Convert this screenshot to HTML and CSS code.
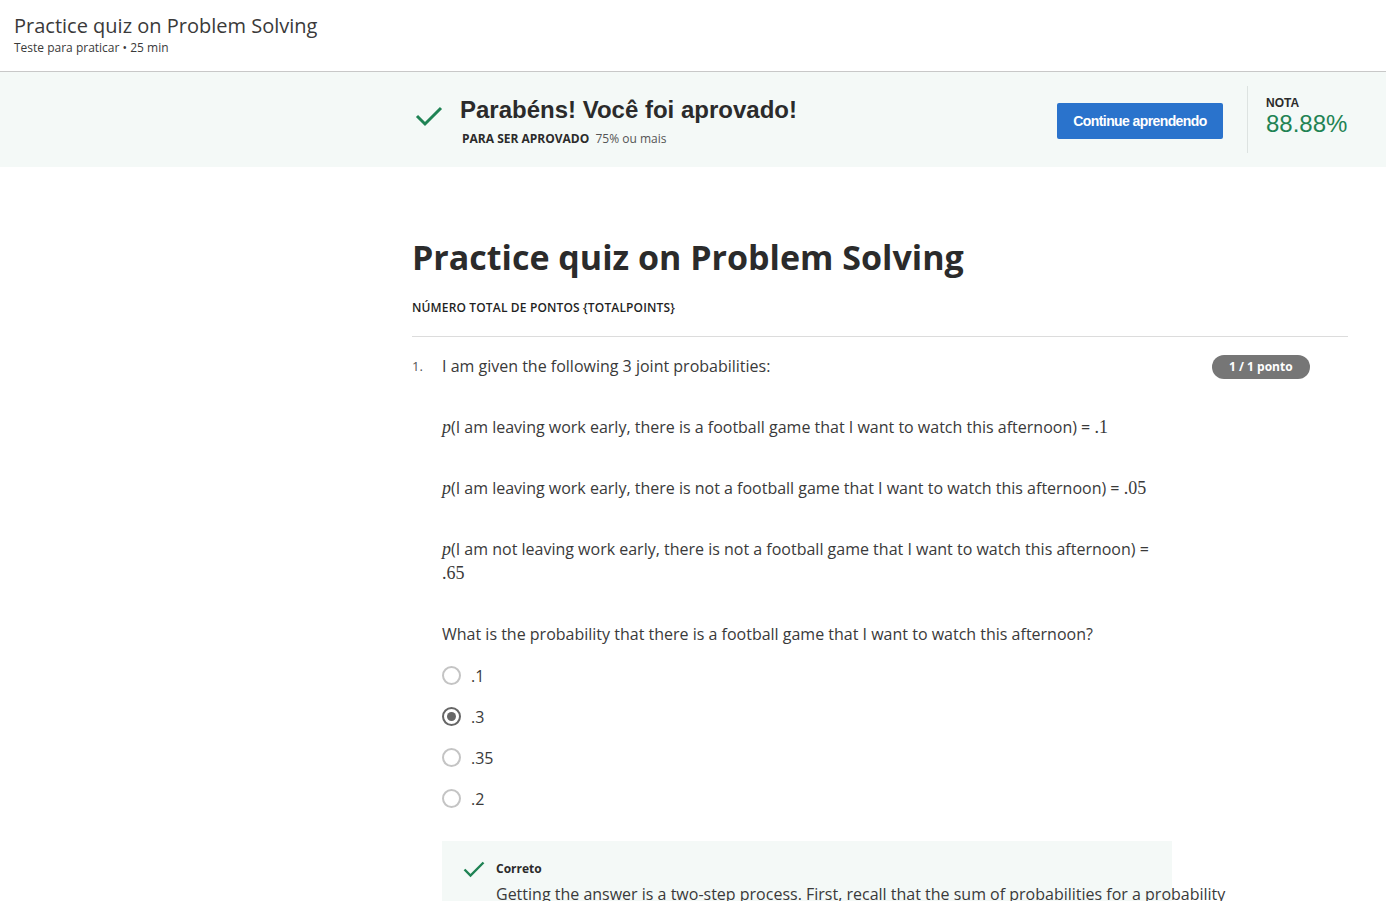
FILE: index.html
```html
<!DOCTYPE html>
<html lang="pt">
<head>
<meta charset="utf-8">
<title>Practice quiz on Problem Solving</title>
<link rel="stylesheet" href="styles.css">
</head>
<body>
<header class="top">
  <div class="top-title">Practice quiz on Problem Solving</div>
  <div class="top-sub">Teste para praticar • 25 min</div>
</header>
<section class="banner">
  <div class="banner-inner">
    <svg class="banner-check" width="28" height="22" viewBox="0 0 28 22"><path d="M2 11 L10 19 L26 3" fill="none" stroke="#1f8354" stroke-width="3"/></svg>
    <div class="banner-text">
      <div class="banner-title">Parabéns! Você foi aprovado!</div>
      <div class="banner-sub"><b>PARA SER APROVADO</b> <span>75% ou mais</span></div>
    </div>
    <button class="btn">Continue aprendendo</button>
    <div class="divider"></div>
    <div class="grade">
      <div class="grade-label">NOTA</div>
      <div class="grade-value">88.88%</div>
    </div>
  </div>
</section>
<main class="main">
  <h1 class="quiz-title">Practice quiz on Problem Solving</h1>
  <div class="points">NÚMERO TOTAL DE PONTOS {TOTALPOINTS}</div>
  <div class="question">
    <div class="qnum">1.</div>
    <div class="qbody">
      <p class="qp">I am given the following 3 joint probabilities:</p>
      <p class="qp"><span class="m">p</span>(I am leaving work early, there is a football game that I want to watch this afternoon) = <span class="n">.1</span></p>
      <p class="qp"><span class="m">p</span>(I am leaving work early, there is not a football game that I want to watch this afternoon) = <span class="n">.05</span></p>
      <p class="qp narrow"><span class="m">p</span>(I am not leaving work early, there is not a football game that I want to watch this afternoon) = <span class="n">.65</span></p>
      <p class="qp last">What is the probability that there is a football game that I want to watch this afternoon?</p>
      <div class="options">
        <label class="opt"><span class="radio"></span>.1</label>
        <label class="opt"><span class="radio checked"></span>.3</label>
        <label class="opt"><span class="radio"></span>.35</label>
        <label class="opt"><span class="radio"></span>.2</label>
      </div>
      <div class="feedback">
        <svg class="fb-check" width="22" height="17" viewBox="0 0 22 17"><path d="M1.5 8.5 L7.5 14.5 L20.5 1.5" fill="none" stroke="#1f8354" stroke-width="2.4"/></svg>
        <div class="fb-text">
          <div class="fb-title">Correto</div>
          <div class="fb-body">Getting the answer is a two-step process. First, recall that the sum of probabilities for a probability</div>
        </div>
      </div>
    </div>
    <div class="badge">1 / 1 ponto</div>
  </div>
</main>
</body>
</html>
```
FILE: styles.css
```css
* { box-sizing: border-box; }
html, body { margin: 0; padding: 0; }
body {
  font-family: "Open Sans", "DejaVu Sans", sans-serif;
  color: #1f1f1f;
  background: #fff;
  overflow: hidden;
  height: 901px;
}
.top {
  height: 72px;
  padding: 12px 14px 0;
  border-bottom: 1px solid #c8c8c8;
}
.top-title {
  font-size: 20px;
  line-height: 28px;
  color: #3a3a3a;
}
.top-sub {
  font-size: 12px;
  line-height: 16px;
  color: #3a3a3a;
}
.banner {
  background: #f4f9f7;
  height: 95px;
}
.banner-inner {
  margin-left: 412px;
  width: 936px;
  height: 95px;
  display: flex;
  align-items: center;
}
.banner-check {
  margin-left: 3px;
  margin-top: -7px;
  flex: none;
}
.banner-text {
  margin-left: 17px;
  flex: 1;
  padding-top: 3px;
}
.banner-title {
  font-family: "Liberation Sans", Arial, sans-serif;
  font-weight: bold;
  font-size: 24px;
  line-height: 30px;
  color: #2b2b2b;
}
.banner-sub {
  font-size: 12px;
  line-height: 16px;
  margin-top: 6px;
  margin-left: 2px;
  color: #555;
}
.banner-sub b {
  color: #2b2b2b;
  margin-right: 3px;
}
.btn {
  font-family: "Liberation Sans", Arial, sans-serif;
  font-weight: bold;
  font-size: 14px;
  letter-spacing: -0.6px;
  color: #fff;
  background: #2a73cc;
  border: none;
  border-radius: 2px;
  width: 166px;
  height: 36px;
  padding: 0;
  margin-top: 3px;
  flex: none;
}
.divider {
  width: 1px;
  height: 67px;
  background: #dde3e1;
  margin: 0 18px 0 24px;
  flex: none;
}
.grade {
  width: 82px;
  flex: none;
  font-family: "Liberation Sans", Arial, sans-serif;
  margin-top: -5px;
}
.grade-label {
  font-weight: bold;
  font-size: 12px;
  line-height: 14px;
  color: #2b2b2b;
}
.grade-value {
  font-size: 24px;
  line-height: 28px;
  color: #1f8354;
}
.main {
  margin-left: 412px;
  width: 936px;
  padding-top: 68px;
}
.quiz-title {
  margin: 0;
  font-size: 34px;
  line-height: 44px;
  font-weight: bold;
  color: #2b2b2b;
}
.points {
  margin-top: 21px;
  font-size: 12px;
  font-weight: 600;
  letter-spacing: 0.15px;
  line-height: 16px;
  color: #1f1f1f;
  padding-bottom: 20px;
  border-bottom: 1px solid #dcdcdc;
}
.question {
  display: flex;
  padding-top: 17px;
}
.qnum {
  width: 30px;
  font-size: 13px;
  line-height: 24px;
  color: #555;
  flex: none;
}
.qbody {
  width: 740px;
  flex: none;
}
.qp {
  margin: 0 0 37px;
  font-size: 16px;
  line-height: 24px;
  color: #3a3a3a;
}
.qp.last { margin-bottom: 0; }
.qp.narrow { width: 720px; }
.m {
  font-family: "Liberation Serif", "Times New Roman", serif;
  font-style: italic;
  font-size: 18px;
}
.n {
  font-family: "Liberation Serif", "Times New Roman", serif;
  font-size: 18px;
}
.options {
  margin-top: 9px;
}
.opt {
  display: flex;
  align-items: center;
  height: 41px;
  font-size: 16px;
  color: #3a3a3a;
}
.radio {
  width: 19px;
  height: 19px;
  border: 2px solid #c4c4c4;
  border-radius: 50%;
  margin-right: 10px;
  display: flex;
  align-items: center;
  justify-content: center;
}
.radio.checked { border-color: #666; }
.radio.checked::after {
  content: "";
  width: 9px;
  height: 9px;
  border-radius: 50%;
  background: #666;
}
.feedback {
  margin-top: 22px;
  width: 730px;
  background: #f4f9f7;
  display: flex;
  padding: 20px 0 0 21px;
  height: 80px;
}
.fb-check { flex: none; margin-top: 0; }
.fb-text { margin-left: 11px; }
.fb-title {
  font-size: 12px;
  font-weight: bold;
  line-height: 16px;
  color: #2b2b2b;
}
.fb-body {
  font-size: 16px;
  line-height: 24px;
  color: #3a3a3a;
  white-space: nowrap;
  margin-top: 5px;
}
.badge {
  margin-left: 30px;
  height: 24px;
  padding: 0 17px;
  margin-top: 1px;
  border-radius: 12px;
  background: #767676;
  color: #fff;
  font-size: 12px;
  font-weight: bold;
  line-height: 24px;
  white-space: nowrap;
  flex: none;
}
```
